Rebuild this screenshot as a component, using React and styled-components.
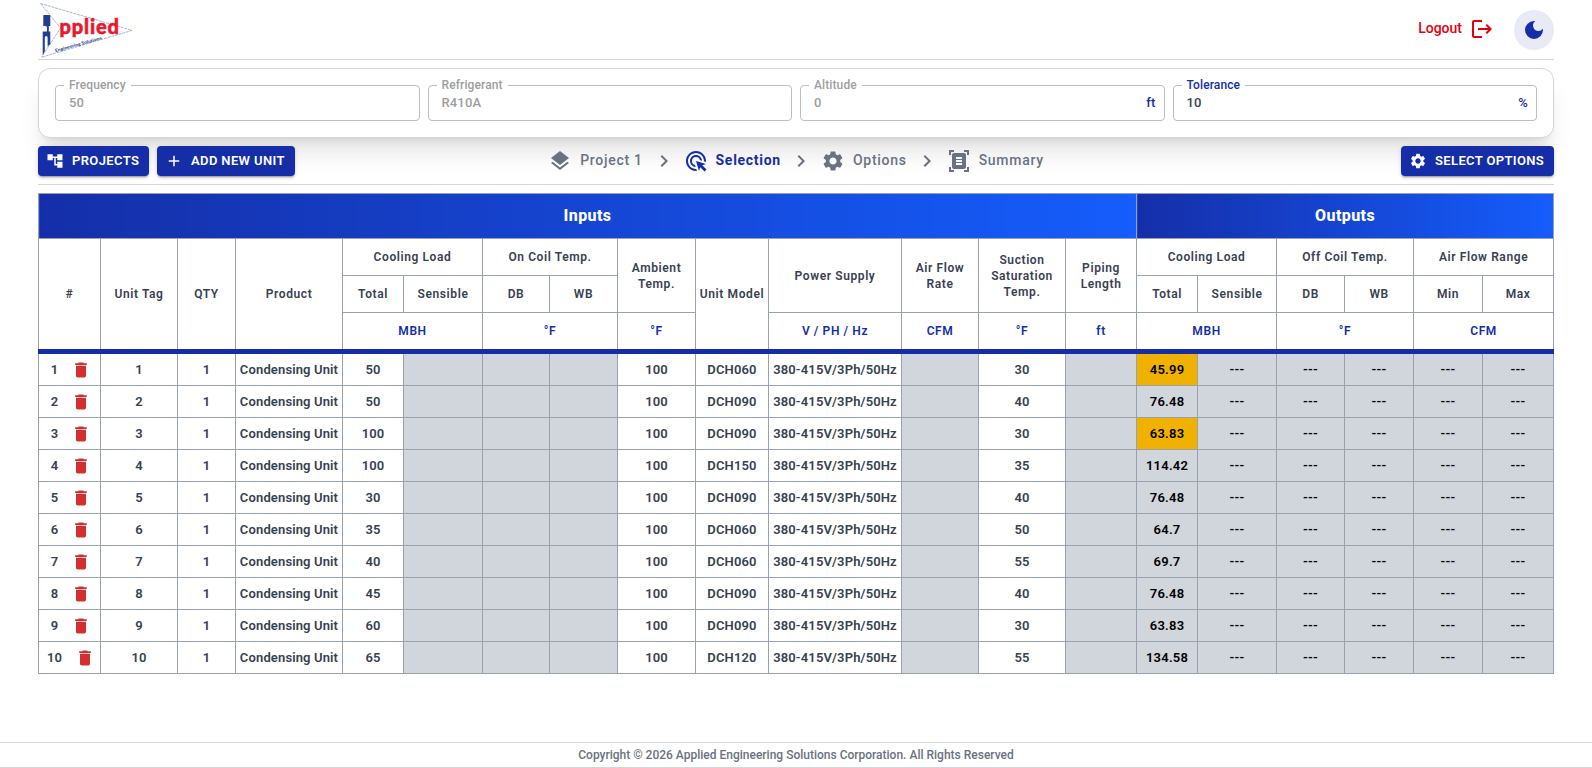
import React from 'react';
import styled, { createGlobalStyle, css } from 'styled-components';
import {
  MdAccountTree, MdAdd, MdSettings, MdLayers, MdAdsClick, MdDocumentScanner,
  MdChevronRight, MdDelete, MdLogout, MdDarkMode,
} from 'react-icons/md';

const BLUE = '#152ea8';
const LINE = '#99a1af';

const GlobalStyle = createGlobalStyle`
  *, *::before, *::after { box-sizing: border-box; }
  body {
    margin: 0;
    background: #fff;
    font-family: Roboto, "Liberation Sans", sans-serif;
    font-weight: 500;
    color: #364153;
  }
`;

const Page = styled.div`
  height: 768px;
  display: flex;
  flex-direction: column;
`;

const Main = styled.main`
  flex: 1;
  padding: 0 38px;
`;

const Header = styled.header`
  height: 60px;
  display: flex;
  align-items: center;
  justify-content: space-between;
  border-bottom: 1px solid #d1d5dc;
`;

const LogoArt = styled.svg`
  display: block;
  width: 100px;
  height: 59px;
`;

const HeaderActions = styled.div`
  display: flex;
  align-items: center;
  gap: 20px;
`;

const LogoutLink = styled.a`
  display: flex;
  align-items: center;
  gap: 8px;
  height: 24px;
  margin-bottom: 2px;
  font-size: 14px;
  line-height: 20px;
  color: #e7000b;
  svg { width: 24px; height: 24px; }
`;

const LogoutText = styled.span`
  padding-bottom: 1px;
`;

const ThemeToggle = styled.button`
  width: 40px;
  height: 40px;
  padding: 8px;
  border: 0;
  border-radius: 50%;
  background: #e8eaf6;
  color: ${BLUE};
  svg { display: block; width: 24px; height: 24px; }
`;

const Card = styled.section`
  display: grid;
  grid-template-columns: repeat(4, 1fr);
  gap: 8px;
  margin-top: 8px;
  height: 70px;
  padding: 16px;
  border: 1px solid #d1d5dc;
  border-radius: 12px;
  background: #fff;
  box-shadow: 0 20px 25px -5px rgba(0, 0, 0, 0.1), 0 8px 10px -6px rgba(0, 0, 0, 0.1);
`;

const FieldBox = styled.fieldset`
  height: 41px;
  min-width: 0;
  margin: -5px 0 0;
  padding: 0 8px;
  border: 1px solid #bdbdbd;
  border-radius: 4px;
  color: ${(p) => (p.$active ? '#364153' : '#9e9e9e')};
  legend {
    height: 11px;
    padding: 0 5px;
    font-size: 12px;
    line-height: 11px;
    letter-spacing: 0.11px;
    color: ${(p) => (p.$active ? BLUE : '#9e9e9e')};
  }
`;

const FieldRow = styled.div`
  display: flex;
  justify-content: space-between;
  padding: 3px 0 0 5px;
  font-size: 13px;
  line-height: 17px;
  letter-spacing: 0.15px;
`;

const Suffix = styled.span`
  color: ${BLUE};
`;

const Toolbar = styled.div`
  display: grid;
  grid-template-columns: 1fr auto 1fr;
  align-items: center;
  height: 47px;
  padding: 8px 0;
  margin-bottom: 8px;
  border-bottom: 1px solid #d1d5dc;
`;

const ButtonGroup = styled.div`
  display: flex;
  gap: 8px;
  justify-content: ${(p) => (p.$end ? 'flex-end' : 'flex-start')};
`;

const ActionButton = styled.button`
  display: flex;
  align-items: center;
  gap: 8px;
  width: ${(p) => p.$width}px;
  height: 30px;
  padding: 0 0 0 8px;
  border: 0;
  border-radius: 4px;
  background: ${BLUE};
  color: #fff;
  font: 600 13px/22px Roboto, "Liberation Sans", sans-serif;
  letter-spacing: 0.37px;
  white-space: nowrap;
  box-shadow: 0 3px 1px -2px rgba(0, 0, 0, 0.2), 0 2px 2px 0 rgba(0, 0, 0, 0.14), 0 1px 5px 0 rgba(0, 0, 0, 0.12);
  svg { width: 18px; height: 18px; flex: none; }
`;

const Steps = styled.nav`
  display: flex;
  align-items: center;
  gap: 8px;
  color: #6a7282;
  > svg { width: 24px; height: 24px; }
  > :first-child { padding-right: 0.8px; }
`;

const Step = styled.span`
  display: flex;
  align-items: center;
  gap: 8px;
  font-size: 14px;
  line-height: 20px;
  letter-spacing: 0.72px;
  font-weight: ${(p) => (p.$current ? 700 : 500)};
  color: ${(p) => (p.$current ? BLUE : '#6a7282')};
  svg { width: 24px; height: 24px; }
  span { padding-bottom: 2px; }
`;

const Table = styled.table`
  width: 1516px;
  table-layout: fixed;
  border-collapse: collapse;
  thead { border-bottom: 5px solid ${BLUE}; }
`;

const HeadRow = styled.tr`
  height: ${(p) => p.$height}px;
`;

const BodyRow = styled.tr`
  height: ${(p) => (p.$first ? 34 : 32)}px;
`;

const cellBase = css`
  padding: 0;
  border: 1px solid ${LINE};
  text-align: center;
  vertical-align: middle;
  white-space: nowrap;
`;

const Band = styled.th`
  ${cellBase}
  background: linear-gradient(to right, #152ea8, #155dfc);
  color: #fff;
  font-size: 16px;
  line-height: 24px;
  font-weight: 800;
  letter-spacing: 0.4px;
`;

const Heading = styled.th`
  ${cellBase}
  font-size: 12px;
  line-height: 16px;
  font-weight: 600;
  letter-spacing: 0.6px;
  white-space: pre-line;
  color: ${(p) => (p.$unit ? BLUE : '#364153')};
`;

const Cell = styled.td`
  ${cellBase}
  font-size: 13px;
  line-height: 20px;
  font-weight: 600;
  letter-spacing: ${(p) => (p.$output ? 0.25 : 0.14)}px;
  color: ${(p) => (p.$output ? '#000' : '#364153')};
  background: ${(p) => (p.$warn ? '#f0b100' : p.$muted || p.$output ? '#d1d5dc' : '#fff')};
`;

const IndexWrap = styled.div`
  display: flex;
  align-items: center;
  justify-content: center;
  gap: 13px;
  svg { width: 20px; height: 20px; margin-right: -3px; color: #d32f2f; }
`;

const Footer = styled.footer`
  height: 26px;
  border-top: 1px solid #d1d5dc;
  border-bottom: 1px solid #d1d5dc;
  text-align: center;
  font-size: 12px;
  line-height: 24px;
  color: #6a7282;
`;

const columnWidths = [62, 77, 58, 107, 61, 79, 67, 68, 78, 73, 133, 77, 87, 71, 61, 79, 68, 69, 69, 71];

const rows = [
  { load: 50, model: 'DCH060', suction: 30, total: '45.99', warn: true },
  { load: 50, model: 'DCH090', suction: 40, total: '76.48' },
  { load: 100, model: 'DCH090', suction: 30, total: '63.83', warn: true },
  { load: 100, model: 'DCH150', suction: 35, total: '114.42' },
  { load: 30, model: 'DCH090', suction: 40, total: '76.48' },
  { load: 35, model: 'DCH060', suction: 50, total: '64.7' },
  { load: 40, model: 'DCH060', suction: 55, total: '69.7' },
  { load: 45, model: 'DCH090', suction: 40, total: '76.48' },
  { load: 60, model: 'DCH090', suction: 30, total: '63.83' },
  { load: 65, model: 'DCH120', suction: 55, total: '134.58' },
];

function Logo() {
  return (
    <LogoArt viewBox="38 0 100 59" aria-label="Applied Engineering Solutions">
      <g fill="none" stroke="#a3a9cc" strokeWidth="0.9" strokeDasharray="3 0.8">
        <path d="M40.500 3.500 132 30.400 41.500 57.300" />
        <path d="M40.500 3.500 60.500 28 41.500 57.300" />
      </g>
      <path
        fill="#1f3f95"
        d="M44 15H49.600Q50.300 15 50.300 16V26H48.800V31.500H50.300V44L47.600 46.500V37.500Q47.600 36 46.200 36Q44.800 36 44.800 37.500V51.500L42.700 55V31.500H47V27.500Q47 26 45.500 26H43.300V15.700Q43.300 15 44 15Z"
      />
      <text x="59.500" y="33.800" textLength="59.500" lengthAdjust="spacing" fill="#e8192c" stroke="#e8192c" strokeWidth="0.5" fontFamily="Lato, Roboto, sans-serif" fontWeight="900" fontSize="20">pplied</text>
      <text x="55.500" y="52" transform="rotate(-15.500 55.500 52)" textLength="48" lengthAdjust="spacingAndGlyphs" fill="#1f3f95" fontFamily="Lato, Roboto, sans-serif" fontWeight="900" fontSize="4.200">Engineering Solutions</text>
    </LogoArt>
  );
}

function Field({ label, value, suffix, active }) {
  return (
    <FieldBox $active={active}>
      <legend>{label}</legend>
      <FieldRow>
        <span>{value}</span>
        {suffix && <Suffix>{suffix}</Suffix>}
      </FieldRow>
    </FieldBox>
  );
}

function UnitsTable() {
  return (
    <Table>
      <colgroup>
        {columnWidths.map((w, i) => <col key={i} width={w} />)}
      </colgroup>
      <thead>
        <HeadRow $height={45}>
          <Band colSpan={14}>Inputs</Band>
          <Band colSpan={6}>Outputs</Band>
        </HeadRow>
        <HeadRow $height={37}>
          <Heading rowSpan={3}>#</Heading>
          <Heading rowSpan={3}>Unit Tag</Heading>
          <Heading rowSpan={3}>QTY</Heading>
          <Heading rowSpan={3}>Product</Heading>
          <Heading colSpan={2}>Cooling Load</Heading>
          <Heading colSpan={2}>On Coil Temp.</Heading>
          <Heading rowSpan={2}>{'Ambient\nTemp.'}</Heading>
          <Heading rowSpan={3}>Unit Model</Heading>
          <Heading rowSpan={2}>Power Supply</Heading>
          <Heading rowSpan={2}>{'Air Flow\nRate'}</Heading>
          <Heading rowSpan={2}>{'Suction\nSaturation\nTemp.'}</Heading>
          <Heading rowSpan={2}>{'Piping\nLength'}</Heading>
          <Heading colSpan={2}>Cooling Load</Heading>
          <Heading colSpan={2}>Off Coil Temp.</Heading>
          <Heading colSpan={2}>Air Flow Range</Heading>
        </HeadRow>
        <HeadRow $height={37}>
          {['Total', 'Sensible', 'DB', 'WB', 'Total', 'Sensible', 'DB', 'WB', 'Min', 'Max'].map((t, i) => (
            <Heading key={i}>{t}</Heading>
          ))}
        </HeadRow>
        <HeadRow $height={39}>
          <Heading $unit colSpan={2}>MBH</Heading>
          <Heading $unit colSpan={2}>°F</Heading>
          <Heading $unit>°F</Heading>
          <Heading $unit>V / PH / Hz</Heading>
          <Heading $unit>CFM</Heading>
          <Heading $unit>°F</Heading>
          <Heading $unit>ft</Heading>
          <Heading $unit colSpan={2}>MBH</Heading>
          <Heading $unit colSpan={2}>°F</Heading>
          <Heading $unit colSpan={2}>CFM</Heading>
        </HeadRow>
      </thead>
      <tbody>
        {rows.map((r, i) => (
          <BodyRow key={i} $first={i === 0}>
            <Cell><IndexWrap>{i + 1}<MdDelete /></IndexWrap></Cell>
            <Cell>{i + 1}</Cell>
            <Cell>1</Cell>
            <Cell>Condensing Unit</Cell>
            <Cell>{r.load}</Cell>
            <Cell $muted />
            <Cell $muted />
            <Cell $muted />
            <Cell>100</Cell>
            <Cell>{r.model}</Cell>
            <Cell>380-415V/3Ph/50Hz</Cell>
            <Cell $muted />
            <Cell>{r.suction}</Cell>
            <Cell $muted />
            <Cell $output $warn={r.warn}>{r.total}</Cell>
            {[0, 1, 2, 3, 4].map((k) => <Cell key={k} $output>---</Cell>)}
          </BodyRow>
        ))}
      </tbody>
    </Table>
  );
}

export default function App() {
  return (
    <>
      <GlobalStyle />
      <Page>
        <Main>
          <Header>
            <Logo />
            <HeaderActions>
              <LogoutLink><LogoutText>Logout</LogoutText><MdLogout /></LogoutLink>
              <ThemeToggle aria-label="Dark mode"><MdDarkMode /></ThemeToggle>
            </HeaderActions>
          </Header>
          <Card>
            <Field label="Frequency" value="50" />
            <Field label="Refrigerant" value="R410A" />
            <Field label="Altitude" value="0" suffix="ft" />
            <Field label="Tolerance" value="10" suffix="%" active />
          </Card>
          <Toolbar>
            <ButtonGroup>
              <ActionButton $width={111}><MdAccountTree />PROJECTS</ActionButton>
              <ActionButton $width={138}><MdAdd />ADD NEW UNIT</ActionButton>
            </ButtonGroup>
            <Steps>
              <Step><MdLayers /><span>Project 1</span></Step>
              <MdChevronRight />
              <Step $current><MdAdsClick /><span>Selection</span></Step>
              <MdChevronRight />
              <Step><MdSettings /><span>Options</span></Step>
              <MdChevronRight />
              <Step><MdDocumentScanner /><span>Summary</span></Step>
            </Steps>
            <ButtonGroup $end>
              <ActionButton $width={153}><MdSettings />SELECT OPTIONS</ActionButton>
            </ButtonGroup>
          </Toolbar>
          <UnitsTable />
        </Main>
        <Footer>Copyright © 2026 Applied Engineering Solutions Corporation. All Rights Reserved</Footer>
      </Page>
    </>
  );
}
